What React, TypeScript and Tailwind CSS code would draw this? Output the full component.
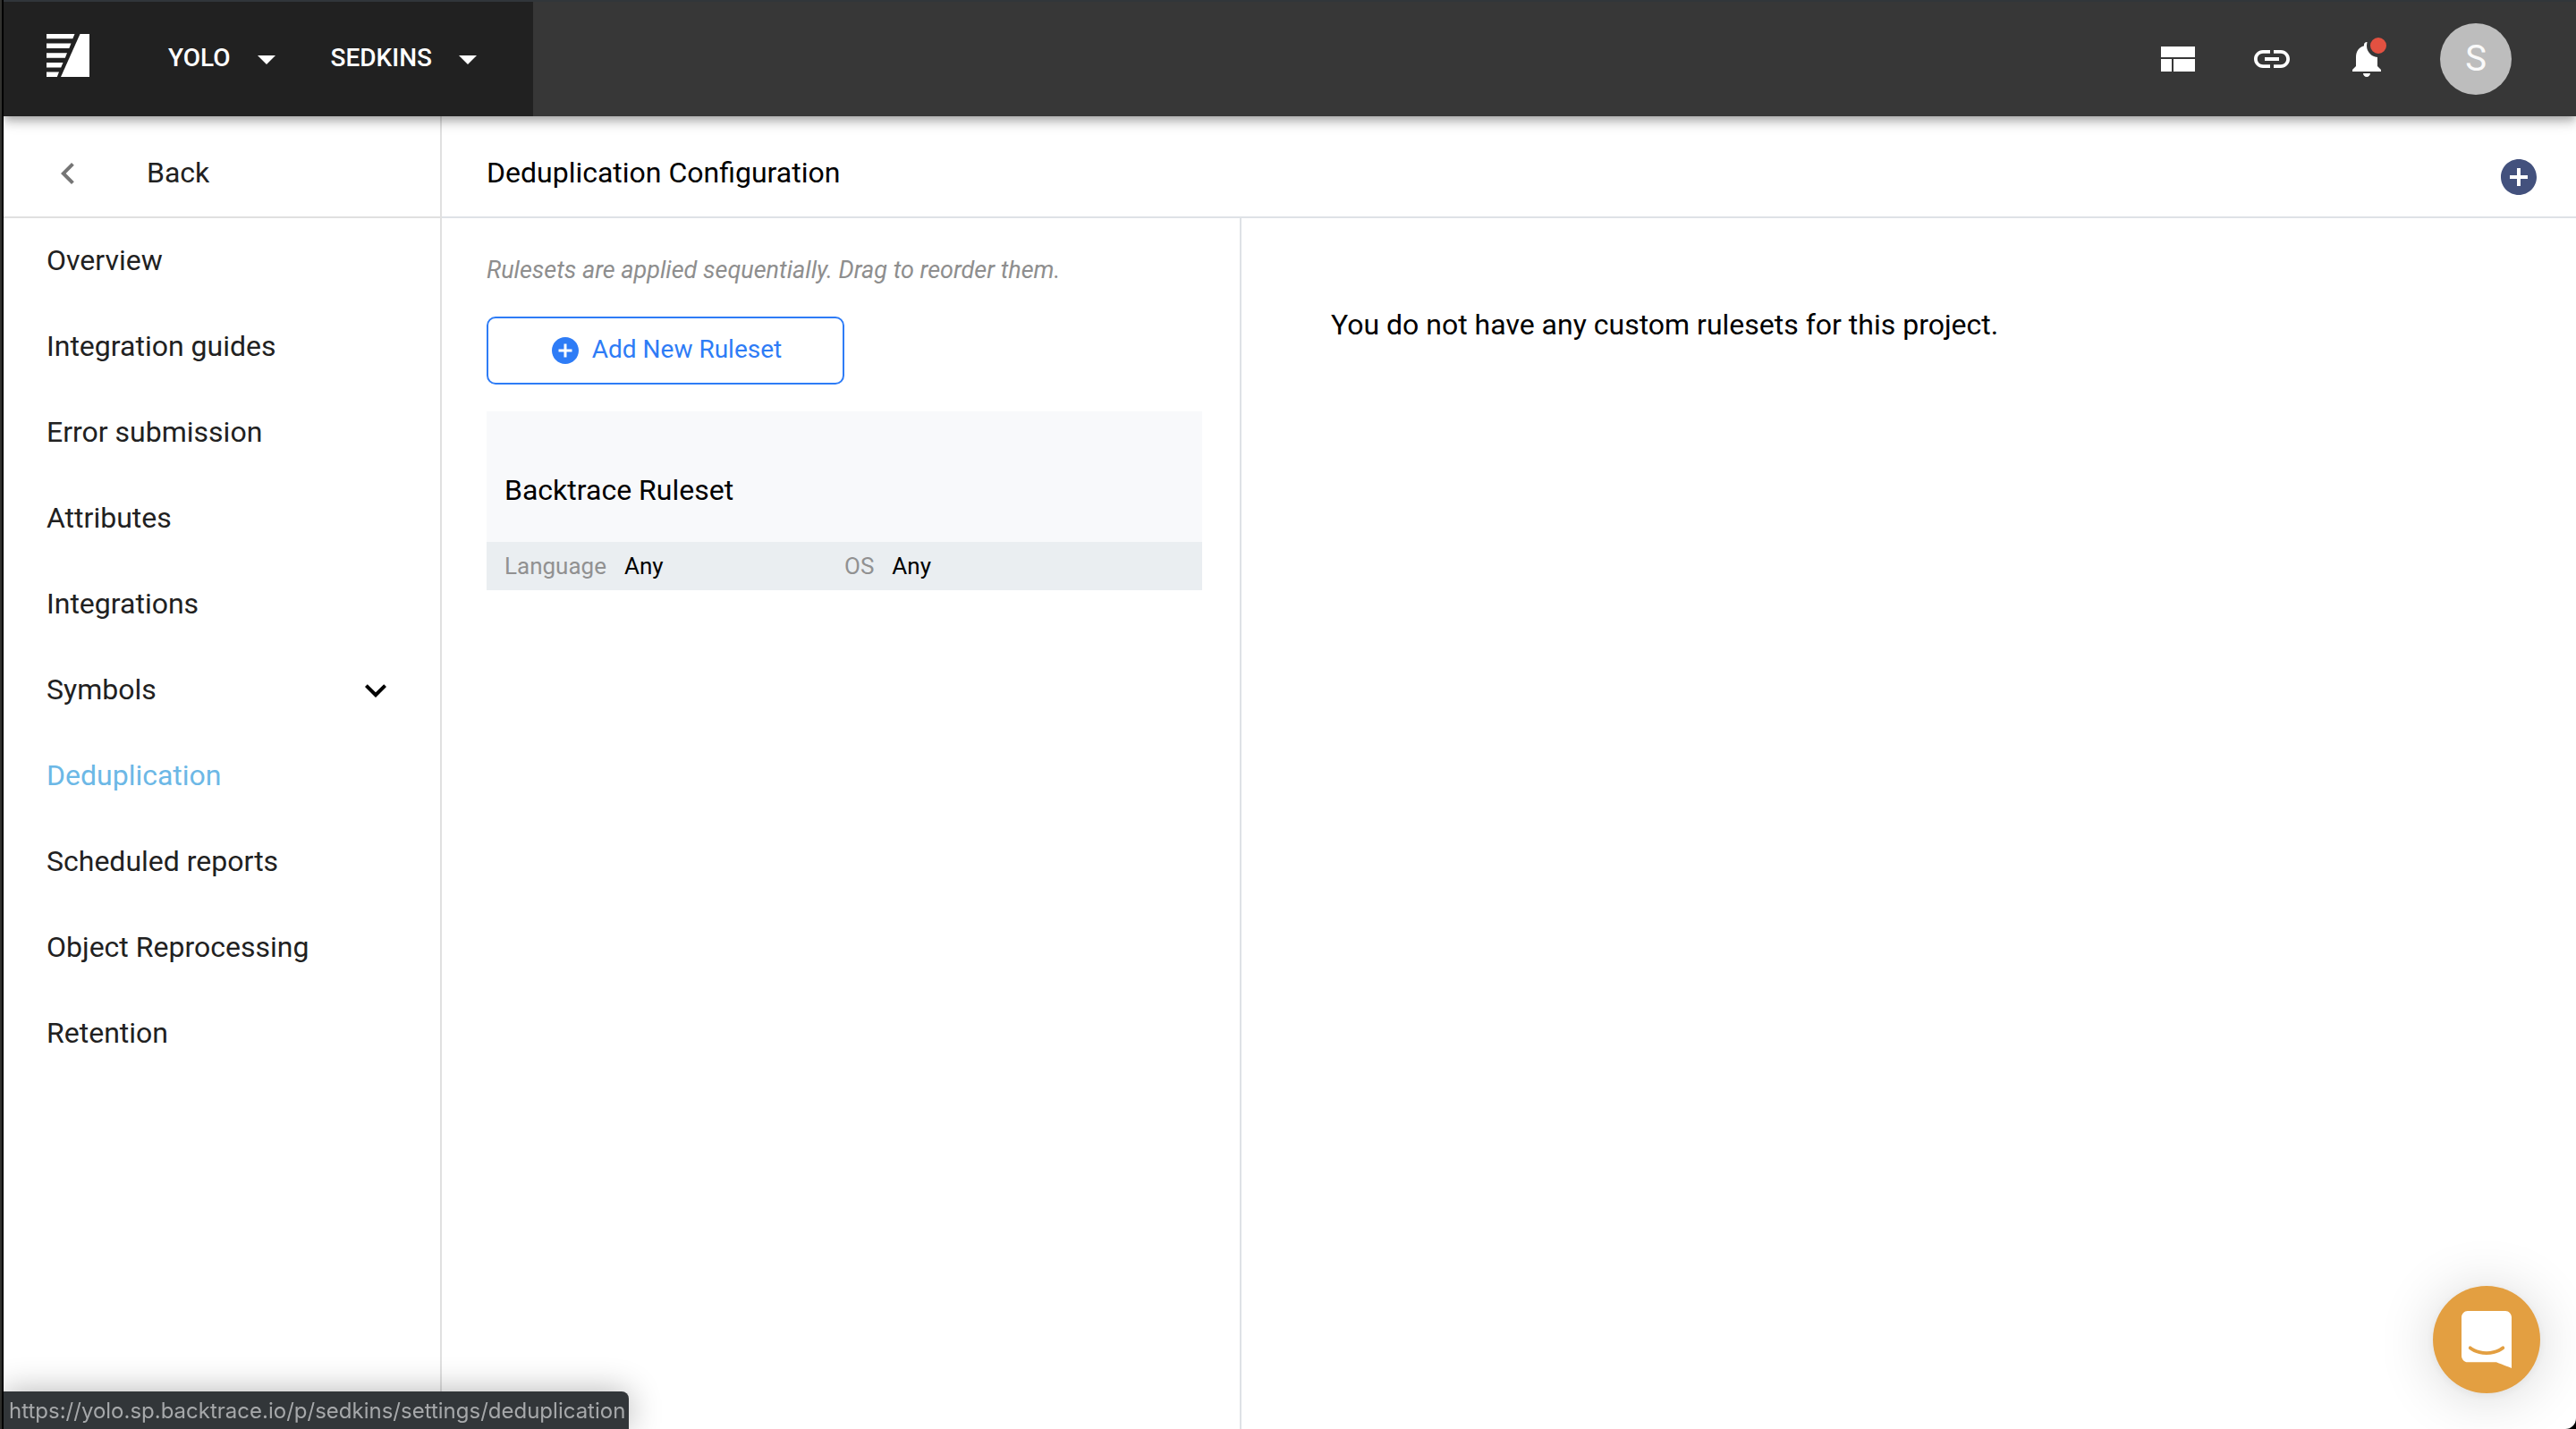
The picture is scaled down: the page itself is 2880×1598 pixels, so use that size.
import React from "react";

const navItems = [
  { label: "Overview" },
  { label: "Integration guides" },
  { label: "Error submission" },
  { label: "Attributes" },
  { label: "Integrations" },
  { label: "Symbols", expandable: true },
  { label: "Deduplication", active: true },
  { label: "Scheduled reports" },
  { label: "Object Reprocessing" },
  { label: "Retention" },
];

function Icon({ d, className = "size-12" }: { d: string; className?: string }) {
  return (
    <svg viewBox="0 0 24 24" fill="currentColor" aria-hidden="true" className={`shrink-0 ${className}`}>
      <path d={d} />
    </svg>
  );
}

const icons = {
  caret: "M7 10l5 5 5-5z",
  back: "M15.41 7.41L14 6l-6 6 6 6 1.41-1.41L10.83 12z",
  expand: "M16.59 8.59L12 13.17 7.41 8.59 6 10l6 6 6-6z",
  layout: "M3 19h6v-7H3v7zm7 0h12v-7H10v7zM3 5v6h19V5H3z",
  link: "M3.9 12c0-1.71 1.39-3.1 3.1-3.1h4V7H7c-2.76 0-5 2.24-5 5s2.24 5 5 5h4v-1.9H7c-1.71 0-3.1-1.39-3.1-3.1zM8 13h8v-2H8v2zm9-6h-4v1.9h4c1.71 0 3.1 1.39 3.1 3.1s-1.39 3.1-3.1 3.1h-4V17h4c2.76 0 5-2.24 5-5s-2.24-5-5-5z",
  bell: "M12 22c1.1 0 2-.9 2-2h-4c0 1.1.89 2 2 2zm6-6v-5c0-3.07-1.64-5.64-4.5-6.32V4c0-.83-.67-1.5-1.5-1.5s-1.5.67-1.5 1.5v.68C7.63 5.36 6 7.92 6 11v5l-2 2v1h16v-1l-2-2z",
  add: "M12 2C6.48 2 2 6.48 2 12s4.48 10 10 10 10-4.48 10-10S17.52 2 12 2zm5 11h-4v4h-2v-4H7v-2h4V7h2v4h4v2z",
};

function Logo() {
  return (
    <svg viewBox="0 0 48 48" fill="white" aria-hidden="true" className="size-12">
      <path d="M37.500 0H48V48H16z" />
      <path d="M0 0H31.500L29.300 5.300H0zM0 10.500H27.500L25.300 16H0zM0 21.200H23L20.800 26.700H0zM0 31.900H18.500L16.200 37.400H0zM0 42.600H14L11.800 48H0z" />
    </svg>
  );
}

function Header() {
  return (
    <header className="relative z-10 flex h-[130px] shrink-0 items-stretch border-t-2 border-[#31363a] bg-[#373737] text-white shadow-[0_4px_8px_-2px_rgba(0,0,0,0.2),0_8px_10px_rgba(0,0,0,0.14),0_2px_20px_rgba(0,0,0,0.12)]">
      <div className="flex w-[592px] items-center bg-[#212121] pb-1 pl-12">
        <a href="#home" aria-label="Home" className="pb-1">
          <Logo />
        </a>
        <button className="ml-[88px] flex items-center gap-4 text-[28px] leading-8 font-medium">
          <span className="pt-0.5">YOLO</span>
          <Icon d={icons.caret} className="mt-1 size-12" />
        </button>
        <button className="ml-12 flex items-center gap-4 text-[28px] leading-8 font-medium">
          <span className="pt-0.5">SEDKINS</span>
          <Icon d={icons.caret} className="mt-1 size-12" />
        </button>
      </div>
      <div className="flex flex-1 items-center justify-end pr-[72px]">
        <button aria-label="Dashboard">
          <Icon d={icons.layout} />
        </button>
        <button aria-label="Copy link" className="ml-[58px]">
          <Icon d={icons.link} />
        </button>
        <button aria-label="Notifications" className="relative ml-[58px]">
          <Icon d={icons.bell} />
          <span className="absolute -top-1 right-[-2px] size-[26px] rounded-full border-4 border-[#373737] bg-[#e25141]" />
        </button>
        <button
          aria-label="Account"
          className="ml-[58px] flex size-20 items-center justify-center rounded-full bg-[#bdbdbd] text-[40px] leading-none text-[#fafafa]"
        >
          S
        </button>
      </div>
    </header>
  );
}

function Sidebar() {
  return (
    <aside className="w-[490px] shrink-0 border-r-2 border-[#e0e0e0] text-[#212121]">
      <a href="#back" className="flex h-[114px] items-center border-b-2 border-[#e0e0e0] pt-4 pl-12">
        <Icon d={icons.back} className="size-12 text-[#757575]" />
        <span className="ml-16 pb-0.5">Back</span>
      </a>
      <nav>
        {navItems.map((item) => (
          <a
            key={item.label}
            href={`#${item.label.toLowerCase().replace(" ", "-")}`}
            className={
              item.active
                ? "flex h-24 items-center justify-between px-12 text-[#6cb8e6]"
                : "flex h-24 items-center justify-between px-12"
            }
          >
            <span className="pb-0.5">{item.label}</span>
            {item.expandable && <Icon d={icons.expand} className="size-12 text-black" />}
          </a>
        ))}
      </nav>
    </aside>
  );
}

function Rulesets() {
  return (
    <section className="w-[894px] shrink-0 border-r-2 border-[#dee2e6] pt-10 pr-[42px] pl-[50px]">
      <p className="text-[27px] leading-9 whitespace-nowrap text-[#8e8e8e] italic">
        Rulesets are applied sequentially. Drag to reorder them.
      </p>
      <button className="mt-[34px] flex h-[76px] w-[400px] items-center justify-center gap-3 rounded-[10px] border-2 border-[#2e7cf6] text-[28px] leading-8 text-[#2e7cf6]">
        <Icon d={icons.add} className="size-9" />
        <span className="pb-0.5">Add New Ruleset</span>
      </button>
      <article className="mt-[30px]">
        <h2 className="bg-[#f8f9fb] px-5 pt-[68px] pb-[38px]">Backtrace Ruleset</h2>
        <dl className="grid h-[54px] grid-cols-2 items-center bg-[#eaeef1] px-5 text-[26px] leading-8">
          <div className="flex gap-5">
            <dt className="text-[#919191]">Language</dt>
            <dd>Any</dd>
          </div>
          <div className="flex gap-5">
            <dt className="text-[#919191]">OS</dt>
            <dd>Any</dd>
          </div>
        </dl>
      </article>
    </section>
  );
}

export default function App() {
  return (
    <div className="flex min-h-screen border-l-2 border-[#32322f] bg-black pl-0.5 font-[Roboto,sans-serif] text-[32px] leading-10 text-black">
      <div className="flex min-w-0 flex-1 flex-col overflow-hidden rounded-b-[12px] bg-white">
        <Header />
        <div className="flex flex-1">
          <Sidebar />
          <main className="flex min-w-0 flex-1 flex-col">
            <div className="flex h-[114px] items-center justify-between border-b-2 border-[#dee2e6] pt-4 pr-10 pl-[50px]">
              <h1 className="pb-0.5">Deduplication Configuration</h1>
              <button aria-label="Add ruleset" className="mt-2 text-[#43517d]">
                <Icon d={icons.add} />
              </button>
            </div>
            <div className="flex flex-1">
              <Rulesets />
              <section className="flex-1 px-[100px] pt-[99px]">
                <p>You do not have any custom rulesets for this project.</p>
              </section>
            </div>
          </main>
        </div>
      </div>
      <div className="fixed bottom-0 left-1 h-[42px] rounded-tr-lg bg-[#323639] pt-0.5 pr-1 pl-1.5 font-[Inter,sans-serif] text-[24px] leading-10 text-[#a6a8aa] shadow-[0_0_36px_rgba(0,0,0,0.3)]">
        https://yolo.sp.backtrace.io/p/sedkins/settings/deduplication
      </div>
      <button
        aria-label="Open chat"
        className="fixed right-10 bottom-10 flex size-[120px] items-center justify-center rounded-full bg-[#e39f41] shadow-[0_2px_12px_rgba(0,0,0,0.06),0_4px_64px_rgba(0,0,0,0.16)]"
      >
        <svg viewBox="0 0 28 32" fill="white" aria-hidden="true" className="h-16 w-14">
          <path d="M28 32s-4.714-1.855-8.527-3.340H3.437C1.540 28.660 0 27.026 0 25.013V3.644C0 1.633 1.540 0 3.437 0h21.125c1.898 0 3.437 1.632 3.437 3.645v18.404H28V32zm-4.139-11.982a.88.88 0 00-1.292-.105c-.03.026-3.015 2.681-8.570 2.681-5.486 0-8.517-2.636-8.571-2.684a.88.88 0 00-1.290.107 1.010 1.010 0 00-.219.708.992.992 0 00.318.664c.142.128 3.537 3.150 9.762 3.150 6.226 0 9.621-3.022 9.763-3.150a.992.992 0 00.317-.664 1.010 1.010 0 00-.218-.707z" />
        </svg>
      </button>
    </div>
  );
}
